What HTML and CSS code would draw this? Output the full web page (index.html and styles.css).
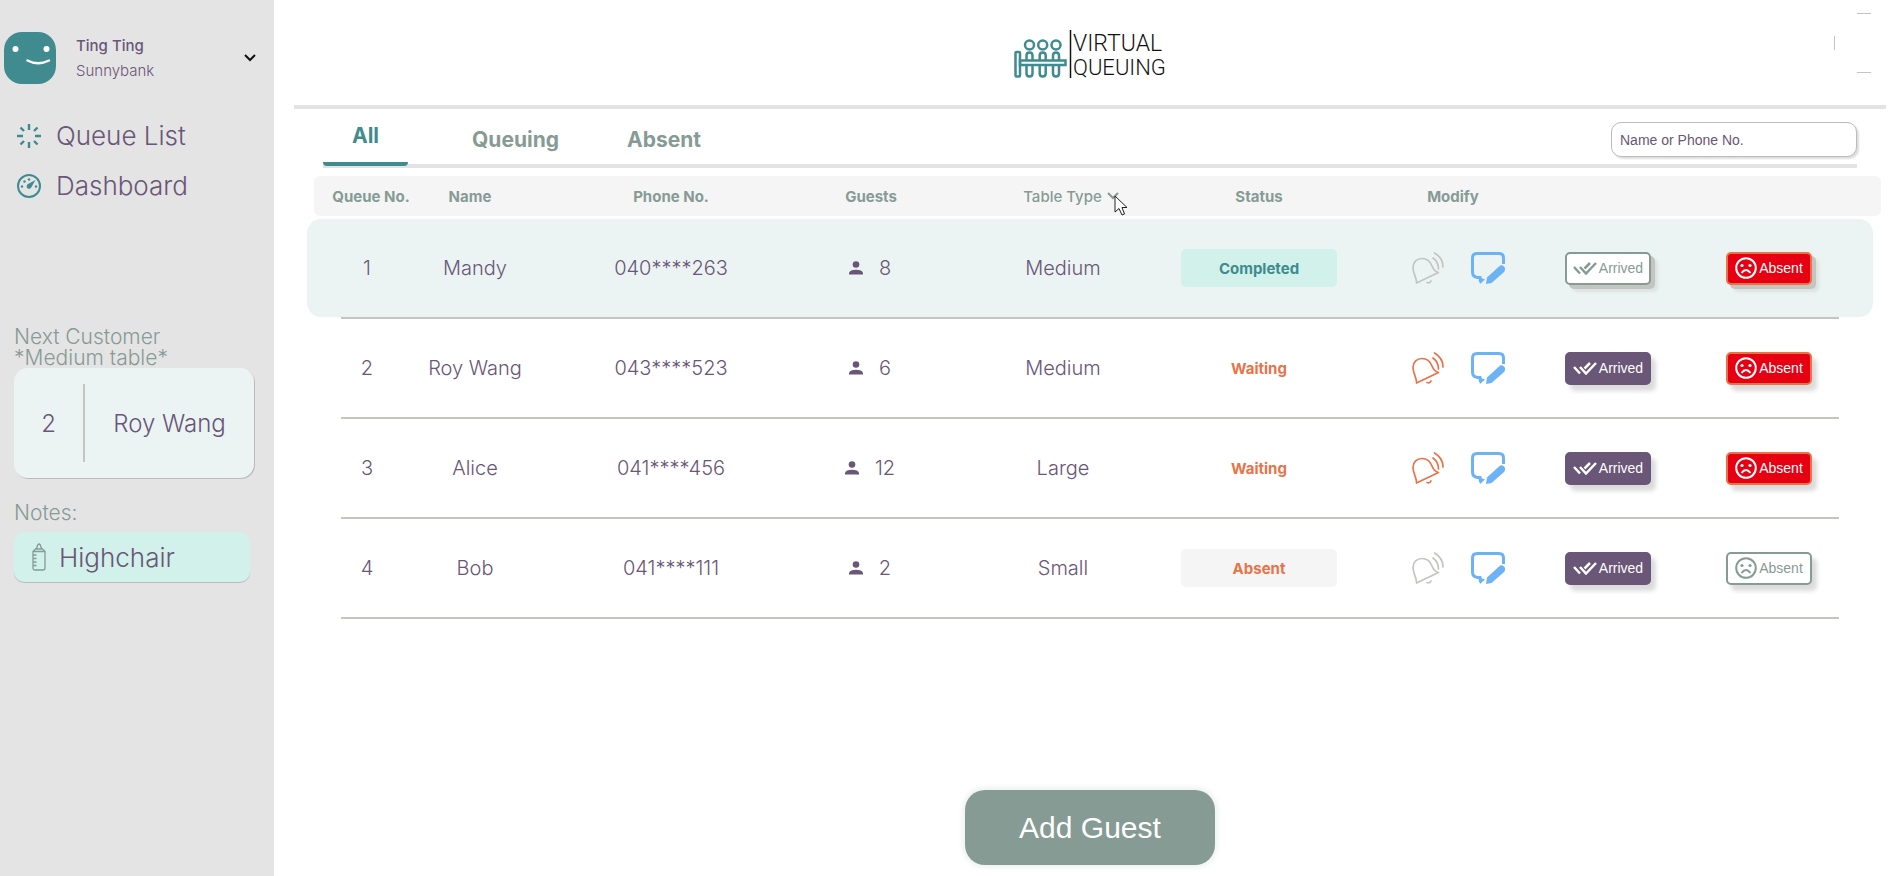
FILE: index.html
```html
<!DOCTYPE html>
<html lang="en">
<head>
<meta charset="utf-8">
<title>Virtual Queuing</title>
<link rel="stylesheet" href="styles.css">
</head>
<body>
<svg class="defs" aria-hidden="true">
  <symbol id="bell" viewBox="0 0 32 32"><g fill="none" stroke="currentColor" stroke-width="1.700" stroke-linecap="round" stroke-linejoin="round"><path d="M4.500 31C5 26 1 22 1 15.500C1 10 5 6.500 10 6.500C15.500 6.500 18.500 10 20 14C21.500 18 23 19.500 26.500 20.500Z"/><path d="M15 30.500Q18 31.500 19 29"/><path d="M21 6Q26.500 10 26.500 17"/><path d="M22.500 1Q31 6 31 15"/></g></symbol>
  <symbol id="edit" viewBox="0 0 34 32"><path d="M9.500 30L9 25.500H6.500Q1.500 25 1.500 20V6Q1.500 1.500 6 1.500H28Q32.500 1.500 32.500 6V12" fill="none" stroke="currentColor" stroke-width="3"/><path d="M7.500 25L9 32L14 27.500Z" fill="currentColor"/><path d="M15 32L16 25.500L28 14.500Q31 12 33.500 15Q35 17.500 32.500 20.500L20.500 31Z" fill="currentColor"/></symbol>
  <symbol id="checks" viewBox="0 0 24 14"><path d="M1 6L7 12.500M7 6L13 12.500L23 2M11.500 7.500L17 2" fill="none" stroke="currentColor" stroke-width="2.500"/></symbol>
  <symbol id="sad" viewBox="0 0 22 22"><circle cx="11" cy="11" r="9.800" fill="none" stroke="currentColor" stroke-width="2"/><circle cx="7" cy="8.500" r="1.600" fill="currentColor"/><circle cx="15" cy="8.500" r="1.600" fill="currentColor"/><path d="M6.500 16Q11 10 15.500 16" fill="none" stroke="currentColor" stroke-width="2"/></symbol>
  <symbol id="person" viewBox="0 0 14 14"><circle cx="7" cy="3.500" r="3.300" fill="currentColor"/><path d="M0 13.500V12Q1 8.800 7 8.800Q13 8.800 14 12V13.500Z" fill="currentColor"/></symbol>
</svg>
<div class="app">
  <aside class="sidebar">
    <div class="profile">
      <svg class="avatar" viewBox="0 0 52 52" aria-hidden="true"><rect width="52" height="52" rx="18" fill="#3f8b8f"/><circle cx="11.500" cy="17" r="3" fill="#fff"/><circle cx="42.500" cy="17" r="3" fill="#fff"/><path d="M23.500 28.500Q34 34 45 28.500" fill="none" stroke="#fff" stroke-width="2.500" stroke-linecap="round"/></svg>
      <div class="profile-text"><strong>Ting Ting</strong><span>Sunnybank</span></div>
      <button class="profile-toggle" aria-label="Account menu"><svg width="14" height="10" viewBox="0 0 14 10"><path d="M2 2L7 7L12 2" fill="none" stroke="currentColor" stroke-width="2"/></svg></button>
    </div>
    <nav class="menu">
      <a href="#queue"><svg viewBox="0 0 24 24" aria-hidden="true"><path d="M12 0V6M12 18V24M0 12H6M18 12H24M3.500 3.500L7 7M17 17L20.500 20.500M3.500 20.500L7 17M17 7L20.500 3.500" stroke="currentColor" stroke-width="2.400"/></svg>Queue List</a>
      <a href="#dashboard"><svg viewBox="0 0 24 24" aria-hidden="true"><circle cx="12" cy="12" r="11" fill="none" stroke="currentColor" stroke-width="2"/><path d="M18.500 6L14.500 13A2.500 2.500 0 1 1 11 10Z" fill="currentColor"/><g fill="currentColor"><circle cx="5" cy="12.500" r="1.200"/><circle cx="7.500" cy="7.500" r="1.200"/><circle cx="12" cy="5.500" r="1.200"/><circle cx="19" cy="12.500" r="1.200"/></g></svg>Dashboard</a>
    </nav>
    <section class="next">
      <p class="caption">Next Customer<br>*Medium table*</p>
      <div class="next-card"><span class="next-number">2</span><span class="next-name">Roy Wang</span></div>
      <p class="caption notes-caption">Notes:</p>
      <div class="note"><svg viewBox="0 0 14 28" aria-hidden="true"><path d="M1 8.500H13V25Q13 27 11 27H3Q1 27 1 25ZM1 8.500L5 4.500Q5.500 1 7 1T9 4.500L13 8.500M4 6H10M1 12H4.500M1 15.500H4.500M1 19H4.500M1 22.500H4.500" fill="none" stroke="currentColor" stroke-width="1.300"/></svg>Highchair</div>
    </section>
  </aside>

  <main class="main">
    <header class="header">
      <svg class="logo" viewBox="0 0 152 50" role="img" aria-label="Virtual Queuing">
        <g fill="none" stroke="#3f8b8f" stroke-width="2.500"><circle cx="15.500" cy="15" r="4.500"/><circle cx="28.700" cy="15" r="4.500"/><circle cx="42" cy="15" r="4.500"/><rect x="1.500" y="22" width="4.500" height="24.500" rx="1"/><path d="M6 30.500H51.500V35H6ZM12.500 30V25.500Q12.500 22.500 15.500 22.500T18.500 25.500V30M25.700 30V25.500Q25.700 22.500 28.700 22.500T31.700 25.500V30M39 30V25.500Q39 22.500 42 22.500T45 25.500V30M12.500 35.500V43.500Q12.500 46.500 15.500 46.500T18.500 43.500V35.500M25.700 35.500V43.500Q25.700 46.500 28.700 46.500T31.700 43.500V35.500M39 35.500V43.500Q39 46.500 42 46.500T45 43.500V35.500"/></g>
        <path d="M56.500 0V48" stroke="#111" stroke-width="1.500"/>
        <text class="logo-top" x="59" y="21">VIRTUAL</text><text class="logo-bottom" x="59" y="45">QUEUING</text>
      </svg>
      <svg class="ring" viewBox="0 0 60 60" aria-hidden="true"><path d="M23 .5H37M23 59.500H37M.5 23V37" stroke="#c4c4c4"/></svg>
    </header>
    <div class="toolbar">
      <nav class="tabs"><a class="tab active" href="#all">All</a><a class="tab" href="#queuing">Queuing</a><a class="tab" href="#absent">Absent</a></nav>
      <input class="search" type="text" placeholder="Name or Phone No." aria-label="Name or Phone No.">
    </div>
    <table class="queue">
      <thead><tr><th>Queue No.</th><th>Name</th><th>Phone No.</th><th>Guests</th><th class="sortable"><button>Table Type<svg width="12" height="8" viewBox="0 0 12 8" aria-hidden="true"><path d="M1 1L6 6L11 1" fill="none" stroke="currentColor" stroke-width="2"/></svg></button><svg class="pointer" width="14" height="22" viewBox="0 0 14 22" aria-hidden="true"><path d="M1 1V17L5 13.500L8 20L10.500 19L8 12.500H13Z" fill="#fff" stroke="#222"/></svg></th><th>Status</th><th>Modify</th></tr></thead>
      <tbody>
        <tr class="current"><td>1</td><td>Mandy</td><td>040****263</td><td class="guests"><svg><use href="#person"/></svg>8</td><td>Medium</td><td><span class="status completed">Completed</span></td>
          <td class="modify"><button class="icon muted" aria-label="Call Mandy" disabled><svg class="bell"><use href="#bell"/></svg></button><button class="icon edit" aria-label="Edit Mandy"><svg><use href="#edit"/></svg></button></td>
          <td><button class="action outline"><svg class="checks"><use href="#checks"/></svg>Arrived</button></td><td class="last"><button class="action absent"><svg class="sad"><use href="#sad"/></svg>Absent</button></td></tr>
        <tr><td>2</td><td>Roy Wang</td><td>043****523</td><td class="guests"><svg><use href="#person"/></svg>6</td><td>Medium</td><td><span class="status waiting">Waiting</span></td>
          <td class="modify"><button class="icon call" aria-label="Call Roy Wang"><svg class="bell"><use href="#bell"/></svg></button><button class="icon edit" aria-label="Edit Roy Wang"><svg><use href="#edit"/></svg></button></td>
          <td><button class="action arrived"><svg class="checks"><use href="#checks"/></svg>Arrived</button></td><td class="last"><button class="action absent"><svg class="sad"><use href="#sad"/></svg>Absent</button></td></tr>
        <tr><td>3</td><td>Alice</td><td>041****456</td><td class="guests"><svg><use href="#person"/></svg>12</td><td>Large</td><td><span class="status waiting">Waiting</span></td>
          <td class="modify"><button class="icon call" aria-label="Call Alice"><svg class="bell"><use href="#bell"/></svg></button><button class="icon edit" aria-label="Edit Alice"><svg><use href="#edit"/></svg></button></td>
          <td><button class="action arrived"><svg class="checks"><use href="#checks"/></svg>Arrived</button></td><td class="last"><button class="action absent"><svg class="sad"><use href="#sad"/></svg>Absent</button></td></tr>
        <tr><td>4</td><td>Bob</td><td>041****111</td><td class="guests"><svg><use href="#person"/></svg>2</td><td>Small</td><td><span class="status gone">Absent</span></td>
          <td class="modify"><button class="icon muted" aria-label="Call Bob" disabled><svg class="bell"><use href="#bell"/></svg></button><button class="icon edit" aria-label="Edit Bob"><svg><use href="#edit"/></svg></button></td>
          <td><button class="action arrived"><svg class="checks"><use href="#checks"/></svg>Arrived</button></td><td class="last"><button class="action outline"><svg class="sad"><use href="#sad"/></svg>Absent</button></td></tr>
      </tbody>
    </table>
    <button class="add">Add Guest</button>
  </main>
</div>
</body>
</html>
```
FILE: styles.css
```css
:root {
  --teal: #3f8b8f;
  --purple: #6a5677;
  --sage: #879b95;
  --orange: #e8734a;
  --line: #c4c4c0;
  --rule: #e3e3e3;
}
* { box-sizing: border-box; }
body {
  margin: 0;
  background: #fff;
  color: var(--purple);
  font-family: Inter, "Open Sans", sans-serif;
  font-size: 20px;
  font-weight: 350;
}
button { padding: 0; border: 0; background: none; color: inherit; font: inherit; }
a { color: inherit; text-decoration: none; }
.defs { display: none; }
.app { display: flex; min-height: 100vh; }

.sidebar { flex: none; width: 274px; background: #e4e4e4; }
.profile { display: flex; align-items: center; padding: 32px 17px 0 4px; }
.avatar { width: 52px; height: 52px; }
.profile-text { display: flex; flex-direction: column; flex: 1; gap: 1px; margin-left: 20px; font-size: 15px; line-height: 24px; }
.profile-text strong { font-weight: 500; }
.profile-toggle { display: flex; color: #111; }
.menu { display: flex; flex-direction: column; gap: 10px; margin-top: 32px; padding-left: 17px; }
.menu a { display: flex; align-items: center; gap: 15px; font-size: 26px; line-height: 40px; }
.menu svg { width: 24px; height: 24px; color: var(--teal); }
.next { margin-top: 120px; padding: 0 20px 0 14px; }
.caption { margin: 0; color: var(--sage); font-size: 21px; line-height: 21px; }
.next-card { display: flex; align-items: center; height: 110px; border-radius: 14px; background: #ebf4f3; box-shadow: 1px 1px 0 #bbb; font-size: 24px; }
.next-number { display: flex; align-items: center; justify-content: center; width: 71px; height: 78px; border-right: 2px solid var(--line); }
.next-name { flex: 1; text-align: center; }
.notes-caption { margin-top: 24px; }
.note { display: flex; align-items: center; gap: 13px; width: 236px; height: 50px; margin-top: 9px; padding-left: 18px; border-radius: 10px; background: #d1f1ea; box-shadow: 0 1px 0 #bbb; font-size: 26px; }
.note svg { width: 14px; height: 28px; color: var(--sage); }

.main { display: flex; flex: 1; flex-direction: column; min-width: 0; padding: 0 7px 11px 20px; }
.header { position: relative; display: flex; justify-content: center; height: 109px; padding-top: 30px; border-bottom: 4px solid var(--rule); }
.logo { width: 152px; height: 50px; }
.logo text { fill: #111; font-family: "Liberation Sans Narrow", Roboto, sans-serif; }
.logo-top { font-size: 23px; }
.logo-bottom { font-size: 22px; }
.ring { position: absolute; top: 13px; right: -8px; width: 60px; height: 60px; }
.toolbar { display: flex; align-items: flex-start; justify-content: space-between; height: 59px; margin: 0 29px; border-bottom: 4px solid var(--rule); }
.tabs { display: flex; }
.tab { padding: 16px 34px 0; color: var(--sage); font-size: 21px; font-weight: 700; line-height: 30px; }
.tab.active { width: 85px; height: 57px; margin-right: 30px; padding: 12px 0 0; border-bottom: 4px solid var(--teal); border-radius: 0 0 4px 4px; color: var(--teal); text-align: center; }
.search { width: 246px; height: 35px; margin-top: 13px; padding: 0 8px; border: 1px solid #bbb; border-radius: 10px; background: #fff; box-shadow: 2px 2px 2px #ddd; color: var(--purple); font: 14px "Liberation Sans", sans-serif; }
.search::placeholder { color: var(--purple); opacity: 1; }

.queue, .queue thead, .queue tbody { display: block; }
.queue { margin-top: 8px; }
.queue tr { display: grid; align-items: center; }
.queue thead tr { grid-template-columns: 114fr 84fr 318fr 82fr 318fr 58fr 330fr 263fr; height: 40px; margin: 0 5px 3px 20px; border-radius: 6px; background: #f5f5f5; }
.queue th { padding: 0; color: var(--sage); font-size: 15px; font-weight: 700; white-space: nowrap; }
.sortable { position: relative; }
.sortable button { display: inline-flex; align-items: center; gap: 5px; font-weight: 500; }
.pointer { position: absolute; top: 8px; right: 102px; }
.queue tbody tr { position: relative; grid-template-columns: 52fr 164fr 228fr 170fr 216fr 176fr 194fr 134fr 164fr; height: 100px; margin: 0 47px; border-bottom: 2px solid var(--line); }
.queue tbody .current::before { content: ""; position: absolute; z-index: -1; inset: 0 -34px; border-radius: 14px; background: #ebf4f3; }
.queue td { display: flex; align-items: center; justify-content: center; padding: 0; white-space: nowrap; }
.guests { gap: 16px; }
.guests svg { width: 14px; height: 14px; }
.status { display: flex; align-items: center; justify-content: center; width: 156px; height: 38px; border-radius: 5px; font-size: 15px; font-weight: 700; }
.completed { background: #d1f1ea; color: var(--teal); }
.waiting { color: var(--orange); }
.gone { background: #f5f5f5; color: var(--orange); }
.queue .modify { justify-content: flex-end; gap: 27px; padding-right: 36px; }
.icon { display: flex; }
.icon svg { width: 34px; height: 32px; }
.icon .bell { width: 32px; }
.muted { color: var(--line); }
.call { color: var(--orange); }
.edit { color: #6cb2f5; }
.queue .last { padding-left: 24px; }
.action { display: flex; align-items: center; justify-content: center; gap: 2px; width: 86px; height: 33px; border: 2px solid; border-radius: 5px; box-shadow: 5px 6px 4px rgb(0 0 0 / 14%); font: 14px "Liberation Sans", sans-serif; }
.current .action { box-shadow: 4px 4px 0 #c4c4c0, 7px 7px 3px #dde2e1; }
.outline { border-color: var(--sage); background: #fff; color: var(--sage); }
.arrived { border-color: var(--purple); background: var(--purple); color: #fff; }
.absent { border-color: var(--orange); background: #e60012; color: #fff; }
.checks { width: 24px; height: 14px; }
.sad { width: 22px; height: 22px; }

.add { align-self: center; width: 250px; height: 75px; margin-top: auto; border-radius: 20px; background: var(--sage); box-shadow: 0 0 5px 3px #eef3f2; color: #fff; font: 30px "Liberation Sans", sans-serif; }
```
